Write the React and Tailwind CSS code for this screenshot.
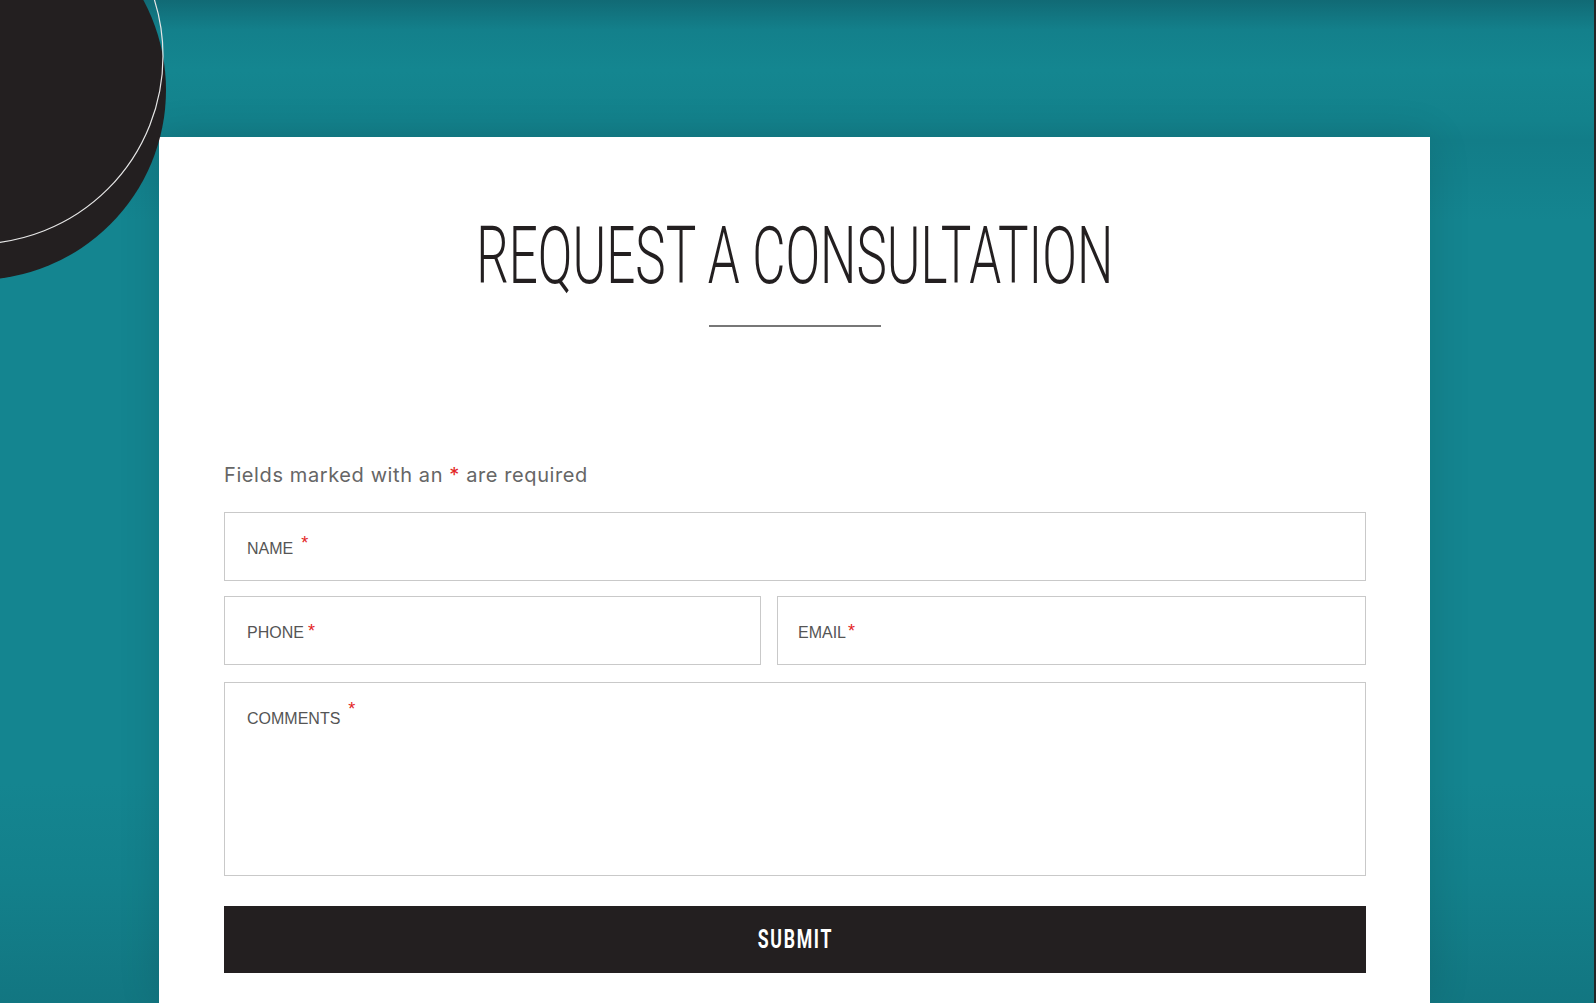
function Req({ className = '' }) {
  return <span className={`text-[#e32424] ${className}`}>*</span>
}

function Field({ label, star, className = '', pad = 'pl-[22px]' }) {
  return (
    <div className={`border border-[#c9c9c9] bg-white pt-[26px] ${pad} ${className}`}>
      <div className="flex items-start text-[16px] leading-5 text-[#555] font-['Liberation_Sans',Arial,sans-serif]">
        <span>{label}</span>
        {star}
      </div>
    </div>
  )
}

export default function App() {
  return (
    <div className="relative h-[1003px] w-full overflow-hidden border-r-2 border-[#262626] bg-[linear-gradient(180deg,#116a75_0%,#13808b_3%,#148690_7%,#13828c_12%,#127d88_14%,#148590_22%,#148590_78%,#13808b_88%,#127681_100%)]">
      <div className="absolute left-[-214px] top-[-100px] z-10 h-[380px] w-[380px] rounded-full bg-[#231f20]" />
      <svg className="absolute left-0 top-0 z-20" width="200" height="260" viewBox="0 0 200 260">
        <circle cx="-25" cy="56" r="188" fill="none" stroke="#e6e6e6" strokeWidth="1.2" />
      </svg>

      <div className="ml-[159px] mt-[137px] h-[866px] w-[1271px] bg-white pl-[65px] pr-[64px] shadow-[0_0_40px_rgba(0,0,0,0.12)]">
        <div className="flex justify-center pt-[79px]">
          <h1 className="scale-x-[0.64] whitespace-nowrap text-[80px] font-light leading-none text-[#231f20] font-['Roboto',sans-serif]">
            REQUEST A CONSULTATION
          </h1>
        </div>
        <div className="mx-auto mt-[29px] h-[2px] w-[172px] bg-[#777]" />

        <p className="mt-[134px] text-[20px] leading-7 tracking-[0.6px] text-[#666] font-['Inter',sans-serif]">
          Fields marked with an <Req /> are required
        </p>

        <div className="mt-[23px] flex flex-col">
          <Field className="h-[69px]" label="NAME" star={<Req className="ml-2 -mt-[6px] text-[18px]" />} />
          <div className="mt-[15px] grid grid-cols-[537px_1fr] gap-4">
            <Field className="h-[69px]" label="PHONE" star={<Req className="ml-1 -mt-[2px] text-[18px]" />} />
            <Field className="h-[69px]" pad="pl-[20px]" label="EMAIL" star={<Req className="ml-0.5 -mt-[2px] text-[18px]" />} />
          </div>
          <Field className="mt-[17px] h-[194px]" label="COMMENTS" star={<Req className="ml-2 -mt-[10px] text-[18px]" />} />
          <button className="mt-[30px] flex h-[67px] w-full items-center justify-center bg-[#231f20]">
            <span className="scale-x-[0.68] text-[26px] font-bold tracking-[2.5px] text-white font-['Roboto',sans-serif]">
              SUBMIT
            </span>
          </button>
        </div>
      </div>
    </div>
  )
}
